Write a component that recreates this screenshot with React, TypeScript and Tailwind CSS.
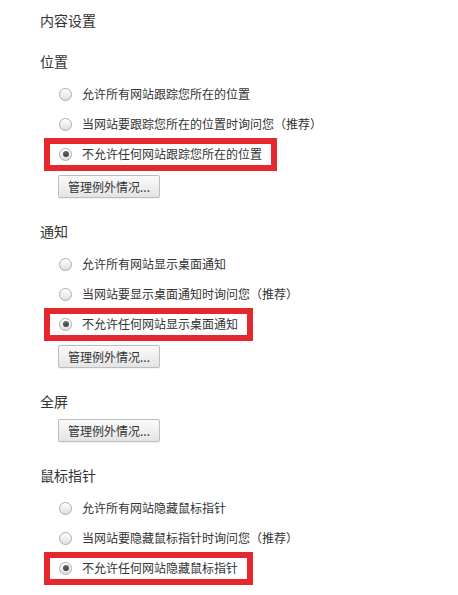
import React from "react";

type Section = {
  title: string;
  options?: string[];
  checked?: number;
  button?: boolean;
};

const sections: Section[] = [
  {
    title: "位置",
    options: [
      "允许所有网站跟踪您所在的位置",
      "当网站要跟踪您所在的位置时询问您（推荐）",
      "不允许任何网站跟踪您所在的位置",
    ],
    checked: 2,
    button: true,
  },
  {
    title: "通知",
    options: [
      "允许所有网站显示桌面通知",
      "当网站要显示桌面通知时询问您（推荐）",
      "不允许任何网站显示桌面通知",
    ],
    checked: 2,
    button: true,
  },
  { title: "全屏", button: true },
  {
    title: "鼠标指针",
    options: [
      "允许所有网站隐藏鼠标指针",
      "当网站要隐藏鼠标指针时询问您（推荐）",
      "不允许任何网站隐藏鼠标指针",
    ],
    checked: 2,
  },
];

function Radio({ checked }: { checked: boolean }) {
  return (
    <span className="flex h-[13px] w-[13px] shrink-0 items-center justify-center rounded-full border border-[#ababab] bg-gradient-to-b from-[#ffffff] to-[#dedede] shadow-[inset_0_1px_0_#fff]">
      {checked && (
        <span className="h-[6px] w-[6px] rounded-full bg-gradient-to-b from-[#6a6a6a] to-[#3f3f3f]" />
      )}
    </span>
  );
}

function Button() {
  return (
    <button className="flex h-[23px] items-center rounded-[2px] border border-[#bdbdbd] bg-gradient-to-b from-[#fbfbfb] to-[#e4e4e4] px-[9px] text-[12px] text-[#333] shadow-[0_1px_0_rgba(0,0,0,0.05)]">
      管理例外情况...
    </button>
  );
}

export default function App() {
  return (
    <div
      className="min-h-screen bg-white pl-[40px] pt-[10px] text-[#333]"
      style={{ fontFamily: '"Noto Sans CJK SC", "Noto Sans", sans-serif' }}
    >
      <div className="h-[20px] text-[14px] leading-[20px]">内容设置</div>

      {sections.map((s, i) => (
        <div key={s.title} className={i === 0 ? "mt-[21px]" : "mt-[23px]"}>
          <div className="h-[20px] text-[14px] leading-[20px]">{s.title}</div>
          {s.options ? (
            <div className="mt-[8px] pl-[19px]">
              {s.options.map((opt, j) => (
                <div key={opt} className="flex h-[30px] items-center">
                  <div className="relative inline-flex items-center gap-[10px]">
                    <Radio checked={j === s.checked} />
                    <span className="text-[12px] leading-[16px] text-[#333]">
                      {opt}
                    </span>
                    {j === s.checked && (
                      <span className="pointer-events-none absolute -bottom-[9px] -left-[15px] -right-[15px] -top-[8px] border-[6px] border-[#e5282d]" />
                    )}
                  </div>
                </div>
              ))}
              {s.button && (
                <div className="mt-[6px] -ml-px">
                  <Button />
                </div>
              )}
            </div>
          ) : (
            <div className="mt-[8px] pl-[18px]">
              <Button />
            </div>
          )}
        </div>
      ))}
    </div>
  );
}
